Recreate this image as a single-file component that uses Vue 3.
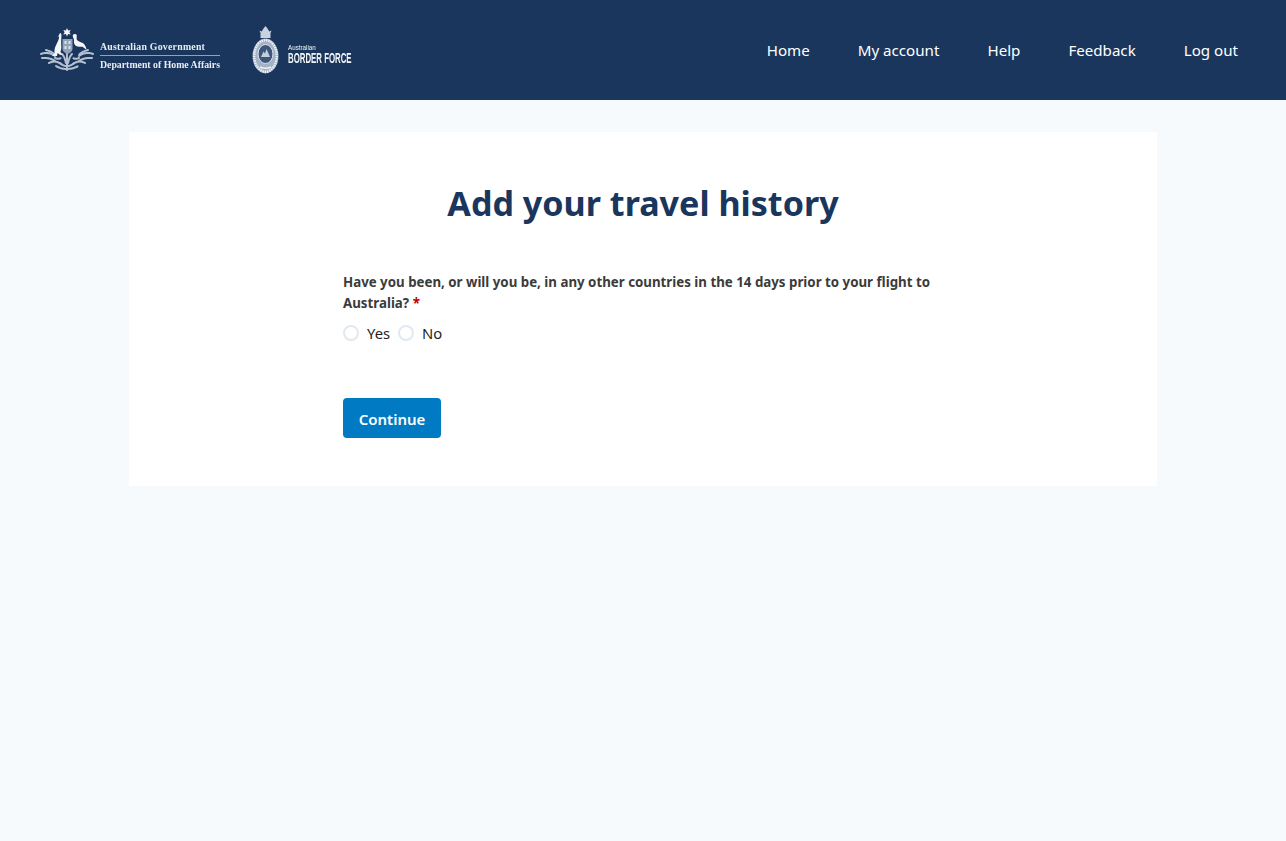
<template>
  <div class="page">
    <header class="topbar">
      <div class="logos">
        <div class="logo-gov">
          <svg class="crest" viewBox="0 0 54 44" fill="#f4f6f9">
            <!-- wattle spray -->
            <g fill="none" stroke="#b4c0cf" stroke-width="2" stroke-dasharray="1.500 .6" stroke-linecap="round">
              <path d="M1 26c5-2 10-1 14 2" />
              <path d="M2 30c5-.5 9 .5 13 3" />
              <path d="M6 22c3 1 7 2 9 5" />
              <path d="M9 35c4-2 8-2 12 1" />
              <path d="M53 26c-5-2-10-1-14 2" />
              <path d="M52 30c-5-.5-9 .5-13 3" />
              <path d="M48 22c-3 1-7 2-9 5" />
              <path d="M45 35c-4-2-8-2-12 1" />
              <path d="M16 38c3 2 7 3 11 3s8-1 11-3" />
              <path d="M20 35c2 2 4 3 7 3s5-1 7-3" />
              <path d="M27 24v18" />
              <path d="M22 26c2 2 3 5 4 9M32 26c-2 2-3 5-4 9" />
              <path d="M15 30c2 1 4 1 6 0M39 30c-2 1-4 1-6 0" />
            </g>
            <!-- star and shield -->
            <path d="M27 0l1.100 2.400 2.600-.5-1.300 2.300 1.300 2.300-2.600-.5L27 8.400l-1.100-2.400-2.600.5 1.300-2.300-1.300-2.300 2.600.5z" />
            <path d="M22.500 11h10v10c0 2.500-2.500 4-5 5-2.500-1-5-2.500-5-5z" fill="#8fa2b8" />
            <path d="M24.500 13h2v3h-2zM28.500 13h2v3h-2zM24.500 18h2v3h-2zM28.500 18h2v3h-2z" fill="#dbe2ea" />
            <!-- kangaroo -->
            <path d="M21 5c-1.200.2-2 1.300-2 2.400l-1.500.8 1.600.4c.1 3-1.600 5.700-3 8.400-1.300 2.600-2 5.300-1.500 8.200L12 28h5l.5-3 2.500 1.800 2.500.2-2-3c.8-2 1-4.500 .7-7.200-.2-2.500 0-5 .2-7.500.1-1.700.2-3.500-.9-5.300z" />
            <!-- emu -->
            <path d="M34.500 6c-1.200.1-1.900 1-1.700 2.200.2 1.700 1.500 2.500 1.200 4.500-.3 1.800.1 3.500 1.500 4.700 1.800 1.500 4.600 1.400 7 1.300 1.300 1 2.700 2 4 3-.4-2.600-1.500-5-3.700-6.600-1.500-1.100-3.800-1.500-5.300-2.700-1-.8-1-2.200-.8-3.500.3-1.600 .1-3.100-2.200-2.900z" />
          </svg>
          <div class="gov-text">
            <span class="gov-line top">Australian Government</span>
            <span class="gov-line">Department of Home Affairs</span>
          </div>
        </div>
        <div class="logo-abf">
          <svg class="badge" viewBox="0 0 27 48" fill="none">
            <path d="M8.500 12V7L7.500 4.500l2.200 1L11.500 2.500 13.500 0l2 2.500 1.800 3 2.200-1L18.500 7v5z" fill="#c9d3df" />
            <ellipse cx="13.500" cy="30" rx="13" ry="17.500" fill="#a3b2c4" />
            <ellipse cx="13.500" cy="30" rx="11.300" ry="15.800" stroke="#eef1f5" stroke-width="2.400" stroke-dasharray="1.500 .8" />
            <ellipse cx="13.500" cy="28" rx="7.500" ry="9.500" fill="#3d5679" stroke="#dfe5ec" stroke-width="1" />
            <path d="M9 31l2.500-5.500 1.500 2 1.500-4.500 3.500 8z" fill="#c4cfdb" />
            <path d="M8 41c3 1.500 8 1.500 11 0" stroke="#eef1f5" stroke-width="1.500" />
          </svg>
          <div class="abf-text">
            <span class="abf-small">Australian</span>
            <span class="abf-big">BORDER FORCE</span>
          </div>
        </div>
      </div>
      <nav class="nav">
        <a v-for="item in navItems" :key="item" class="nav-link">{{ item }}</a>
      </nav>
    </header>

    <main class="main">
      <section class="card">
        <h1 class="title">Add your travel history</h1>
        <form class="form" @submit.prevent>
          <p class="question">
            Have you been, or will you be, in any other countries in the 14 days prior to your flight to<br />
            Australia?
            <span class="req">*</span>
          </p>
          <div class="radios">
            <label v-for="opt in options" :key="opt" class="radio">
              <span class="radio-dot"></span>
              <span>{{ opt }}</span>
            </label>
          </div>
          <button class="continue" type="submit">Continue</button>
        </form>
      </section>
    </main>
  </div>
</template>

<script setup>
const navItems = ['Home', 'My account', 'Help', 'Feedback', 'Log out']
const options = ['Yes', 'No']
</script>

<style>
body {
  margin: 0;
  background: #f7fafc;
}
</style>

<style scoped>
.page {
  min-height: 841px;
  background: #f7fafc;
  font-family: "Noto Sans", "Open Sans", sans-serif;
}

.topbar {
  height: 100px;
  background: #1a365d;
  display: flex;
  align-items: center;
  justify-content: space-between;
  padding: 0 48px 0 40px;
}

.logos {
  display: flex;
  align-items: center;
  gap: 32px;
  filter: blur(0.35px);
}

.logo-gov {
  display: flex;
  align-items: center;
  gap: 6px;
}

.crest {
  width: 54px;
  height: 44px;
}

.gov-text {
  display: flex;
  flex-direction: column;
  margin-top: 10px;
  width: 120px;
  font-family: "Liberation Serif", serif;
  font-weight: 700;
  font-size: 9.800px;
  line-height: 11px;
  color: #e8edf3;
  white-space: nowrap;
}

.gov-line.top {
  padding-bottom: 3px;
  margin-bottom: 3px;
  border-bottom: 1px solid #8fa2b8;
  letter-spacing: 0.250px;
}

.logo-abf {
  display: flex;
  align-items: center;
  gap: 9px;
}

.badge {
  width: 27px;
  height: 48px;
}

.abf-text {
  display: flex;
  flex-direction: column;
  width: 64px;
  margin-top: 8px;
  font-family: "Liberation Sans", sans-serif;
  color: #f2f5f8;
  white-space: nowrap;
}

.abf-small {
  font-size: 8px;
  line-height: 9px;
  transform-origin: left;
  transform: scaleX(0.78);
}

.abf-big {
  font-size: 14px;
  line-height: 13px;
  font-weight: 700;
  transform-origin: left;
  transform: scaleX(0.56);
}

.nav {
  display: flex;
  gap: 48px;
}

.nav-link {
  color: #fff;
  font-size: 15.130px;
  line-height: 24px;
}

.main {
  padding-top: 32px;
  display: flex;
  justify-content: center;
}

.card {
  width: 1028px;
  height: 354px;
  box-sizing: border-box;
  background: #fff;
  padding-top: 47px;
}

.title {
  margin: 0;
  text-align: center;
  color: #1a365d;
  font-size: 34.100px;
  line-height: 48px;
  font-weight: 700;
}

.form {
  margin: 45px 0 0 214px;
  width: 600px;
}

.question {
  margin: 0;
  color: #3b3b3b;
  font-size: 13.300px;
  line-height: 21px;
  font-weight: 700;
}

.req {
  color: #c00000;
}

.radios {
  display: flex;
  gap: 8px;
  margin-top: 7px;
}

.radio {
  display: flex;
  align-items: center;
  gap: 8px;
  font-size: 14.800px;
  line-height: 24px;
  color: #1f1f1f;
}

.radio-dot {
  width: 12px;
  height: 12px;
  border: 2px solid #e2e8f0;
  border-radius: 50%;
  background: #fff;
}

.continue {
  display: block;
  margin-top: 53px;
  padding: 1px 0 0;
  width: 98px;
  height: 40px;
  border: 0;
  border-radius: 4px;
  background: #007ac3;
  color: #fff;
  font-family: inherit;
  font-size: 15px;
  font-weight: 600;
}
</style>
